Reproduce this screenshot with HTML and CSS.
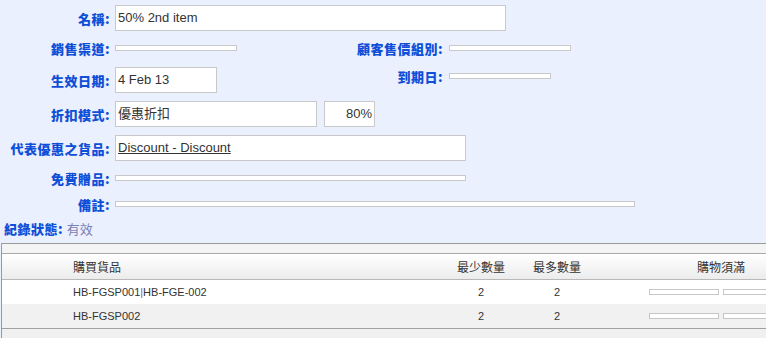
FILE: index.html
```html
<!DOCTYPE html>
<html lang="zh-Hant">
<head>
<meta charset="utf-8">
<title>Discount</title>
<link rel="stylesheet" href="styles.css">
</head>
<body>
<div class="page">
  <div class="form">
    <div class="row r-input">
      <div class="lbl">名稱:</div>
      <div class="box w-name">50% 2nd item</div>
    </div>
    <div class="row r-bar r-first">
      <div class="lbl">銷售渠道:</div>
      <div class="cell"><div class="bar w-122"></div></div>
      <div class="lbl2">顧客售價組別:</div>
      <div class="bar w-122"></div>
    </div>
    <div class="row r-input r-date">
      <div class="lbl">生效日期:</div>
      <div class="cell"><div class="box w-date">4 Feb 13</div></div>
      <div class="lbl2 up">到期日:</div>
      <div class="bar w-102 up"></div>
    </div>
    <div class="row r-input">
      <div class="lbl">折扣模式:</div>
      <div class="box w-mode">優惠折扣</div>
      <div class="box w-pct right">80%</div>
    </div>
    <div class="row r-input">
      <div class="lbl">代表優惠之貨品:</div>
      <div class="box w-item"><span class="link">Discount - Discount</span></div>
    </div>
    <div class="row r-bar">
      <div class="lbl">免費贈品:</div>
      <div class="bar w-351"></div>
    </div>
    <div class="row r-bar r-note">
      <div class="lbl">備註:</div>
      <div class="bar w-520"></div>
    </div>
    <div class="status"><span class="slbl">紀錄狀態:</span> <span class="sval">有效</span></div>
  </div>

  <div class="grid">
    <div class="band"></div>
    <div class="thead">
      <div class="c c0"></div>
      <div class="c c1">購買貨品</div>
      <div class="c c2">最少數量</div>
      <div class="c c3">最多數量</div>
      <div class="c c4">購物須滿</div>
    </div>
    <div class="tr">
      <div class="c c0"></div>
      <div class="c c1">HB-FGSP001<span class="pipe">|</span>HB-FGE-002</div>
      <div class="c c2">2</div>
      <div class="c c3">2</div>
      <div class="c c4"><span class="tbar"></span><span class="tbar"></span></div>
    </div>
    <div class="tr alt">
      <div class="c c0"></div>
      <div class="c c1">HB-FGSP002</div>
      <div class="c c2">2</div>
      <div class="c c3">2</div>
      <div class="c c4"><span class="tbar"></span><span class="tbar"></span></div>
    </div>
    <div class="tfoot"></div>
  </div>
</div>
</body>
</html>
```

FILE: styles.css
```css
html, body {
  margin: 0;
  padding: 0;
}
body {
  background: #eaf0fe;
  font-family: "Liberation Sans", Arial, "Noto Sans CJK TC", sans-serif;
  width: 766px;
  height: 338px;
  overflow: hidden;
}
.page {
  width: 766px;
}
.form {
  display: flex;
  flex-direction: column;
  gap: 8px;
  padding-top: 5px;
}
.row {
  display: flex;
  align-items: center;
}
.r-input { height: 26px; }
.r-bar { height: 18px; }
.r-first { margin-top: 0; }
.r-date { margin-top: 2px; }
.r-note { margin-top: 0; }
.lbl, .lbl2, .slbl {
  font-family: "Noto Sans CJK TC", sans-serif;
  font-weight: 900;
  font-size: 13px;
  color: #0f4fd8;
  letter-spacing: 0.5px;
}
.lbl {
  width: 110px;
  text-align: right;
  margin-right: 5px;
  flex: none;
}
.cell {
  width: 220px;
  flex: none;
  display: flex;
  align-items: center;
}
.lbl2 {
  width: 108px;
  text-align: right;
  margin-right: 6px;
  flex: none;
}
.up { position: relative; top: -4px; }
.box {
  box-sizing: border-box;
  height: 26px;
  background: #fff;
  border: 1px solid #c9c9c9;
  font-size: 13px;
  color: #333;
  padding: 0 2px;
  line-height: 24px;
  white-space: nowrap;
  font-family: "Liberation Sans", Arial, "Noto Sans CJK TC", sans-serif;
}
.w-name { width: 391px; }
.w-date { width: 102px; }
.w-mode { width: 202px; }
.w-pct { width: 51px; margin-left: 7px; }
.w-item { width: 351px; }
.right { text-align: right; }
.link { text-decoration: underline; }
.bar {
  box-sizing: border-box;
  height: 6px;
  background: #fff;
  border: 1px solid #c9c9c9;
  flex: none;
}
.w-122 { width: 122px; }
.w-102 { width: 102px; }
.w-351 { width: 351px; }
.w-520 { width: 520px; }
.status {
  height: 18px;
  line-height: 15px;
  padding-left: 4px;
  font-size: 13px;
}
.sval {
  font-family: "Noto Sans CJK TC", sans-serif;
  color: #7b80b4;
}
.grid {
  margin-top: 4px;
  margin-left: 1px;
  border-left: 1px solid #9a9a9a;
  border-top: 1px solid #9a9a9a;
  background: #f0f0f0;
  height: 96px;
  overflow: hidden;
}
.band {
  height: 9px;
  background: #f4f4f4;
  border-bottom: 1px solid #a9a9a9;
}
.thead, .tr {
  display: grid;
  grid-template-columns: 65px 376px 76px 76px 252px;
  align-items: center;
}
.thead {
  height: 25px;
  background: linear-gradient(#ffffff, #ececec);
  border-bottom: 1px solid #b8b8b8;
  font-family: "Noto Sans CJK TC", sans-serif;
  font-size: 12px;
  color: #333;
}
.tr {
  height: 24px;
  background: #fff;
  font-size: 11px;
  line-height: 22px;
  color: #333;
}
.tr.alt {
  background: #f1f1f1;
}
.tfoot {
  border-top: 1px solid #a0a0a0;
  height: 20px;
  background: #f0f0f0;
}
.c1 { padding-left: 6px; }
.c2, .c3, .c4 { text-align: center; }
.pipe { color: #8a5a8a; }
.c4 {
  display: flex;
  justify-content: center;
  align-items: center;
  gap: 4px;
  height: 20px;
}
.tbar {
  display: block;
  box-sizing: border-box;
  width: 70px;
  height: 6px;
  background: #fff;
  border: 1px solid #c6c6c6;
  flex: none;
}
```
